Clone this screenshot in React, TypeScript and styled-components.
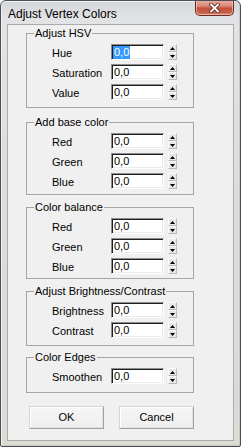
import React from "react";
import styled, { createGlobalStyle } from "styled-components";

const Global = createGlobalStyle`
  html, body { margin: 0; padding: 0; background: #ffffff; }
  body { font-family: "Liberation Sans", Arial, sans-serif; }
  #root { width: 241px; height: 447px; }
`;

const Window = styled.div`
  box-sizing: border-box;
  width: 241px;
  height: 447px;
  border: 1px solid #4b4f55;
  border-radius: 6px 6px 2px 2px;
  background: linear-gradient(180deg, #d4d6d9 0%, #e2e3e5 4%, #dcdddf 40%, #d9dadb 90%, #dedcd0 100%);
  box-shadow: inset 1px 1px 0 #f2f2f2, inset -1px -1px 0 #c8c8c8;
  display: flex;
  flex-direction: column;
  overflow: hidden;
`;

const TitleBar = styled.div`
  height: 23px;
  display: flex;
  align-items: flex-start;
  justify-content: space-between;
  padding-left: 7px;
  padding-right: 6px;
`;

const Title = styled.div`
  font-family: "Liberation Sans", Arial, sans-serif;
  font-size: 12px;
  line-height: 14px;
  color: #000;
  padding-top: 6px;
`;

const CloseButton = styled.div`
  width: 39px;
  height: 16px;
  margin-top: -1px;
  box-sizing: border-box;
  border: 1px solid #6e2a22;
  border-top: none;
  border-radius: 0 0 5px 5px;
  background: linear-gradient(180deg, #e9b0a2 0%, #d88a78 40%, #c2503c 55%, #c6614c 85%, #d88f7c 100%);
  box-shadow: inset 0 0 0 1px rgba(255, 220, 210, 0.55);
  display: flex;
  align-items: center;
  justify-content: center;
`;

const Client = styled.div`
  flex: 1;
  margin: 0 6px 5px 6px;
  border: 1px solid #a9abad;
  background: #f0f0f0;
  padding-left: 18px;
  display: flex;
  flex-direction: column;
`;

const Group = styled.div<{ $h: number; $mt: number }>`
  position: relative;
  box-sizing: border-box;
  width: 168px;
  height: ${(p) => p.$h}px;
  margin-top: ${(p) => p.$mt}px;
  border: 1px solid #a5a5a5;
  padding: 10px 0 0 25px;
  display: flex;
  flex-direction: column;
  gap: 4px;
`;

const Legend = styled.div`
  position: absolute;
  left: 7px;
  top: -7px;
  padding: 0 1px;
  background: #f0f0f0;
  font-size: 11px;
  line-height: 13px;
  color: #000;
  white-space: nowrap;
`;

const Row = styled.div`
  display: flex;
  align-items: center;
  height: 16px;
`;

const Label = styled.div`
  width: 59px;
  font-size: 11px;
  line-height: 16px;
  color: #000;
  white-space: nowrap;
  padding-top: 1px;
`;

const Field = styled.div`
  box-sizing: border-box;
  width: 53px;
  height: 16px;
  background: #fff;
  border-style: solid;
  border-width: 1px;
  border-color: #8e8e8e #ffffff #ffffff #8e8e8e;
  box-shadow: inset 1px 1px 0 #1e1e1e, inset -1px -1px 0 #ebebeb;
  padding: 1px 0 0 2px;
  font-size: 11px;
  line-height: 13px;
  color: #000;
  display: flex;
  align-items: center;
`;

const Selected = styled.span`
  background: #3399ff;
  color: #fff;
  padding: 0 1px;
  margin-left: -1px;
`;

const Spinner = styled.div`
  margin-left: 4px;
  width: 9px;
  height: 16px;
  display: flex;
  flex-direction: column;
`;

const SpinBtn = styled.div`
  box-sizing: border-box;
  height: 8px;
  background: #e7e7e7;
  border-style: solid;
  border-width: 1px;
  border-color: #fbfbfb #b9b9b9 #b9b9b9 #fbfbfb;
  display: flex;
  align-items: center;
  justify-content: center;
`;

const ButtonRow = styled.div<{ $mt: number }>`
  display: flex;
  gap: 15px;
  padding-left: 3px;
  margin-top: ${(p) => p.$mt}px;
`;

const Button = styled.div`
  box-sizing: border-box;
  width: 75px;
  height: 23px;
  background: linear-gradient(180deg, #f6f6f6 0%, #eeeeee 100%);
  border-style: solid;
  border-width: 1px;
  border-color: #d6d6d6 #a0a0a0 #a0a0a0 #d6d6d6;
  box-shadow: inset 1px 1px 0 #ffffff, inset -1px -1px 0 #e2e2e2;
  font-size: 11px;
  line-height: 13px;
  color: #000;
  display: flex;
  align-items: center;
  justify-content: center;
`;

const Arrow: React.FC<{ up?: boolean }> = ({ up }) => (
  <svg width="5" height="3" viewBox="0 0 5 3">
    {up ? <polygon points="2.5,0 5,3 0,3" fill="#000" /> : <polygon points="0,0 5,0 2.5,3" fill="#000" />}
  </svg>
);

const SpinControl: React.FC = () => (
  <Spinner>
    <SpinBtn>
      <Arrow up />
    </SpinBtn>
    <SpinBtn>
      <Arrow />
    </SpinBtn>
  </Spinner>
);

const ValueRow: React.FC<{ label: string; selected?: boolean }> = ({ label, selected }) => (
  <Row>
    <Label>{label}</Label>
    <Field>{selected ? <Selected>0,0</Selected> : "0,0"}</Field>
    <SpinControl />
  </Row>
);

type GroupDef = { title: string; h: number; mt: number; rows: string[] };

const groups: GroupDef[] = [
  { title: "Adjust HSV", h: 75, mt: 8, rows: ["Hue", "Saturation", "Value"] },
  { title: "Add base color", h: 73, mt: 14, rows: ["Red", "Green", "Blue"] },
  { title: "Color balance", h: 72, mt: 12, rows: ["Red", "Green", "Blue"] },
  { title: "Adjust Brightness/Contrast", h: 55, mt: 12, rows: ["Brightness", "Contrast"] },
  { title: "Color Edges", h: 36, mt: 11, rows: ["Smoothen"] },
];

export default function App() {
  return (
    <>
      <Global />
      <Window>
        <TitleBar>
          <Title>Adjust Vertex Colors</Title>
          <CloseButton>
            <svg width="11" height="10" viewBox="0 0 11 10">
              <path d="M2 1.5 L9 8.5 M9 1.5 L2 8.5" stroke="#5a2a24" strokeWidth="3.6" strokeLinecap="square" />
              <path d="M2 1.5 L9 8.5 M9 1.5 L2 8.5" stroke="#ffffff" strokeWidth="1.8" strokeLinecap="square" />
            </svg>
          </CloseButton>
        </TitleBar>
        <Client>
          {groups.map((g, gi) => (
            <Group key={g.title} $h={g.h} $mt={g.mt}>
              <Legend>{g.title}</Legend>
              {g.rows.map((r, ri) => (
                <ValueRow key={r} label={r} selected={gi === 0 && ri === 0} />
              ))}
            </Group>
          ))}
          <ButtonRow $mt={13}>
            <Button>OK</Button>
            <Button>Cancel</Button>
          </ButtonRow>
        </Client>
      </Window>
    </>
  );
}
